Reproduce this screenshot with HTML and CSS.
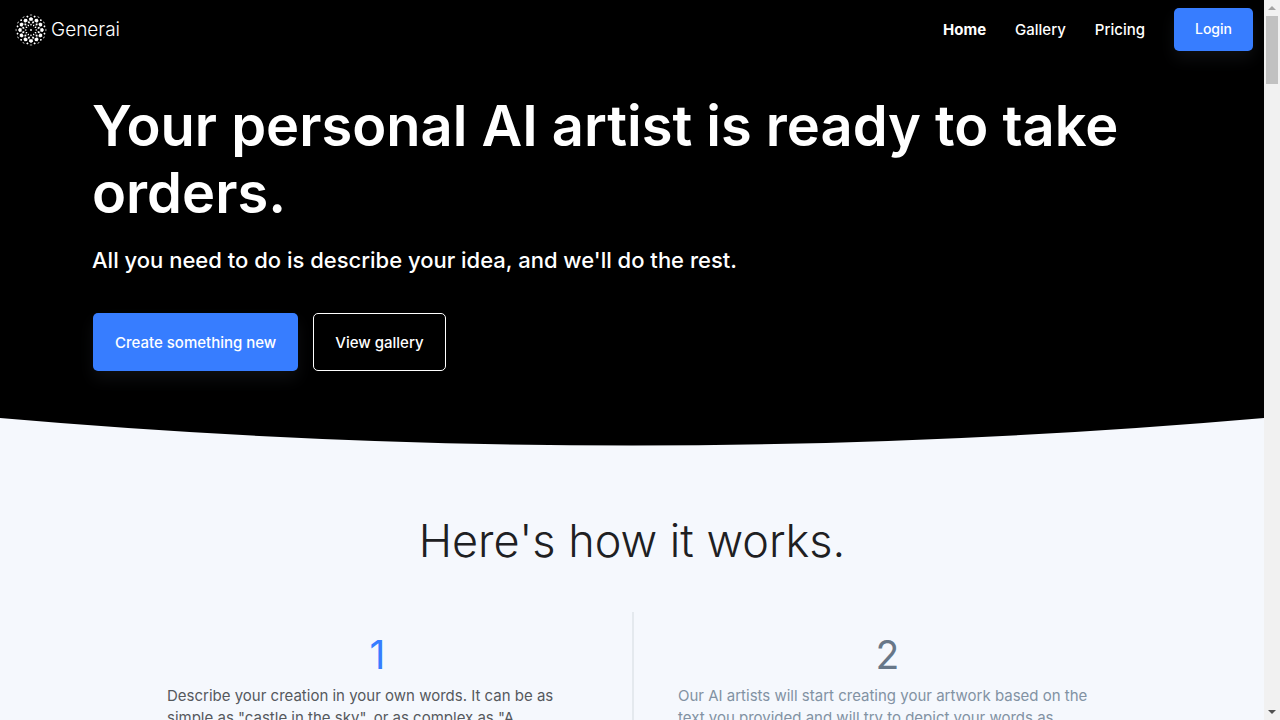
FILE: index.html
```html
<!DOCTYPE html>
<html lang="en">
<head>
<meta charset="utf-8">
<meta name="viewport" content="width=device-width, initial-scale=1">
<title>Generai</title>
<link rel="stylesheet" href="styles.css">
</head>
<body>
<div class="page">
  <div class="hero">
    <header class="topbar">
      <a class="brand" href="#">
        <svg class="brand-mark" viewBox="-16 -16 32 32" aria-hidden="true">
          <defs>
            <g id="petal">
              <path d="M-1.5 -15 Q0 -15.8 1.5 -15 L0 -14.4Z"/>
              <path d="M0 -13 L2.1 -11.6 L1.5 -9.3 L-1.5 -9.3 L-2.1 -11.6Z"/>
              <path d="M0 -6.4 L.8 -5.4 L0 -4.1 L-.8 -5.4Z"/>
              <path transform="rotate(15)" d="M0 -9.3 L1.2 -8 L0 -6.5 L-1.2 -8Z"/>
              <path transform="rotate(15)" d="M0 -15 L1.2 -14 L0 -12.8 L-1.2 -14Z"/>
            </g>
          </defs>
          <use href="#petal"/><use href="#petal" transform="rotate(30)"/><use href="#petal" transform="rotate(60)"/>
          <use href="#petal" transform="rotate(90)"/><use href="#petal" transform="rotate(120)"/><use href="#petal" transform="rotate(150)"/>
          <use href="#petal" transform="rotate(180)"/><use href="#petal" transform="rotate(210)"/><use href="#petal" transform="rotate(240)"/>
          <use href="#petal" transform="rotate(270)"/><use href="#petal" transform="rotate(300)"/><use href="#petal" transform="rotate(330)"/>
          <circle r=".9"/>
        </svg>
        <span class="brand-name">Generai</span>
      </a>
      <nav class="nav">
        <a class="nav-link nav-link-active" href="#">Home</a>
        <a class="nav-link" href="#">Gallery</a>
        <a class="nav-link" href="#">Pricing</a>
        <button class="btn btn-primary btn-login" type="button">Login</button>
      </nav>
    </header>
    <section class="intro">
      <h1 class="headline">Your personal AI artist is ready to take orders.</h1>
      <p class="lead">All you need to do is describe your idea, and we'll do the rest.</p>
      <div class="actions">
        <button class="btn btn-primary btn-large" type="button">Create something new</button>
        <button class="btn btn-outline btn-large" type="button">View gallery</button>
      </div>
    </section>
  </div>
  <svg class="curve" viewBox="0 0 1264 28" preserveAspectRatio="none" aria-hidden="true">
    <path d="M0 0 Q632 55 1264 0Z"/>
  </svg>
  <section class="how">
    <h2 class="how-title">Here's how it works.</h2>
    <div class="steps">
      <article class="step step-current">
        <h3 class="step-number">1</h3>
        <p class="step-text">Describe your creation in your own words. It can be as simple as "castle in the sky", or as complex as "A</p>
      </article>
      <article class="step">
        <h3 class="step-number">2</h3>
        <p class="step-text">Our AI artists will start creating your artwork based on the text you provided and will try to depict your words as</p>
      </article>
    </div>
  </section>
</div>
<div class="scrollbar" aria-hidden="true">
  <svg class="scroll-arrow scroll-arrow-up" viewBox="0 0 16 16"><path d="M4 10 L8 6 L12 10Z"/></svg>
  <div class="scroll-thumb"></div>
  <svg class="scroll-arrow scroll-arrow-down" viewBox="0 0 16 16"><path d="M4 6 L8 10 L12 6Z"/></svg>
</div>
</body>
</html>
```
FILE: styles.css
```css
* { box-sizing: border-box; }

body {
  margin: 0;
  height: 100vh;
  display: flex;
  overflow: hidden;
  background: #f5f8fd;
  color: #1e2022;
  font-family: Inter, "Liberation Sans", sans-serif;
  font-size: 15px;
}

h1, h2, h3, p { margin: 0; }

.page { flex: 1; min-width: 0; overflow: hidden; }

.hero { background: #000; color: #fff; padding-bottom: 47px; }

.topbar {
  display: flex;
  align-items: center;
  justify-content: space-between;
  padding: 8px 11px 8px 15px;
}

.brand { display: flex; align-items: center; gap: 4px; color: #fff; text-decoration: none; }
.brand-mark { width: 32px; height: 32px; fill: #fff; }
.brand-name { font-size: 19px; line-height: 24px; font-weight: 300; }

.nav { display: flex; align-items: center; gap: 29px; }
.nav-link { color: #fff; font-size: 15px; font-weight: 500; text-decoration: none; }
.nav-link-active { font-weight: 700; }

.btn {
  border: 1px solid transparent;
  border-radius: 5px;
  color: #fff;
  font: 500 15px/24px Inter, "Liberation Sans", sans-serif;
}
.btn-primary { background: #377dff; box-shadow: 0 8px 16px rgba(140, 152, 164, .1); }
.btn-outline { background: transparent; border-color: #fff; }
.btn-login { padding: 8px 20px 9px; font-size: 14px; }
.btn-large { padding: 17px 21px 15px; }

.intro { padding: 34px 93px 0 92px; }
.headline { font-size: 56px; line-height: 67px; font-weight: 600; }
.lead { margin-top: 15px; font-size: 22px; line-height: 36px; font-weight: 500; }
.actions { display: flex; gap: 15px; margin: 35px 1px 0; }

.curve { display: block; width: 100%; height: 28px; fill: #000; }

.how { padding-top: 68px; }
.how-title { font-size: 45px; line-height: 54px; font-weight: 300; text-align: center; }

.steps { display: grid; grid-template-columns: 1fr 1fr; margin: 44px 123px 0; }
.step { padding: 21px 44px 44px; color: #8292a3; }
.step + .step { border-left: 2px solid #e4e9ee; }
.step-number { font-size: 39px; line-height: 44px; font-weight: 400; text-align: center; color: #677788; }
.step-text { margin-top: 8px; font-size: 15px; line-height: 22px; font-weight: 400; }
.step-current { color: #55595d; }
.step-current .step-number { color: #377dff; }

.scrollbar { flex: 0 0 16px; display: flex; flex-direction: column; align-items: center; background: #f1f1f1; }
.scroll-arrow { width: 16px; height: 16px; }
.scroll-arrow-up { fill: #a3a3a3; }
.scroll-arrow-down { fill: #505050; margin-top: auto; }
.scroll-thumb { width: 12px; height: 68px; background: #c1c1c1; }
```
